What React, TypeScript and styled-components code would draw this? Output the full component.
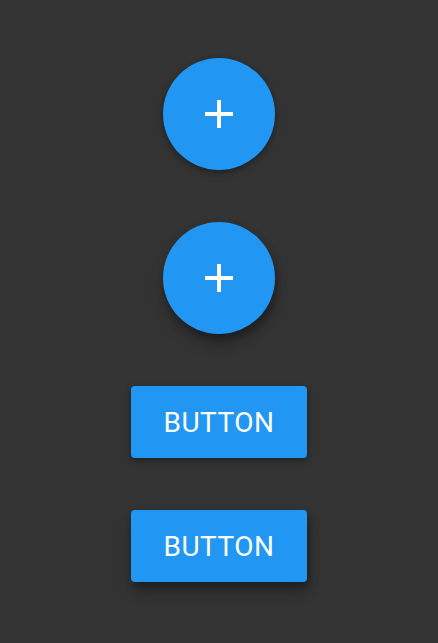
import React from "react";
import styled, { createGlobalStyle } from "styled-components";

const Global = createGlobalStyle`
  html, body { margin: 0; padding: 0; background: #333333; }
  body { font-family: Roboto, "Noto Sans", sans-serif; }
`;

const Page = styled.div`
  width: 438px;
  height: 643px;
  box-sizing: border-box;
  padding-top: 57.5px;
  display: flex;
  flex-direction: column;
  align-items: center;
  gap: 52.3px;
  background: #333333;
`;

const Fab = styled.button<{ $raised?: boolean }>`
  width: 112px;
  height: 112px;
  border-radius: 50%;
  border: none;
  padding: 0;
  background: #2196f3;
  display: flex;
  align-items: center;
  justify-content: center;
  box-shadow: ${(p) =>
    p.$raised
      ? "2px 6px 8px 0 rgba(0,0,0,0.32), 0 10px 16px 0 rgba(0,0,0,0.14)"
      : "0 2px 5px 0 rgba(0,0,0,0.3), 0 4px 10px 0 rgba(0,0,0,0.12)"};
`;

const RaisedButton = styled.button<{ $raised?: boolean }>`
  width: 176px;
  height: 72px;
  border: none;
  border-radius: 4px;
  background: #2196f3;
  color: #ffffff;
  font-family: Roboto, "Noto Sans", sans-serif;
  font-size: 28px;
  font-weight: 400;
  letter-spacing: 0.5px;
  display: flex;
  align-items: center;
  justify-content: center;
  padding: 0;
  box-shadow: ${(p) =>
    p.$raised
      ? "2px 6px 8px 0 rgba(0,0,0,0.32), 0 10px 16px 0 rgba(0,0,0,0.14)"
      : "0 2px 5px 0 rgba(0,0,0,0.3), 0 3px 8px 0 rgba(0,0,0,0.12)"};
`;

const AddIcon = () => (
  <svg width="48" height="48" viewBox="0 0 24 24" fill="#ffffff">
    <path d="M19 13h-6v6h-2v-6H5v-2h6V5h2v6h6v2z" />
  </svg>
);

export default function App() {
  return (
    <>
      <Global />
      <Page>
        <Fab aria-label="add">
          <AddIcon />
        </Fab>
        <Fab $raised aria-label="add">
          <AddIcon />
        </Fab>
        <RaisedButton>BUTTON</RaisedButton>
        <RaisedButton $raised>BUTTON</RaisedButton>
      </Page>
    </>
  );
}
